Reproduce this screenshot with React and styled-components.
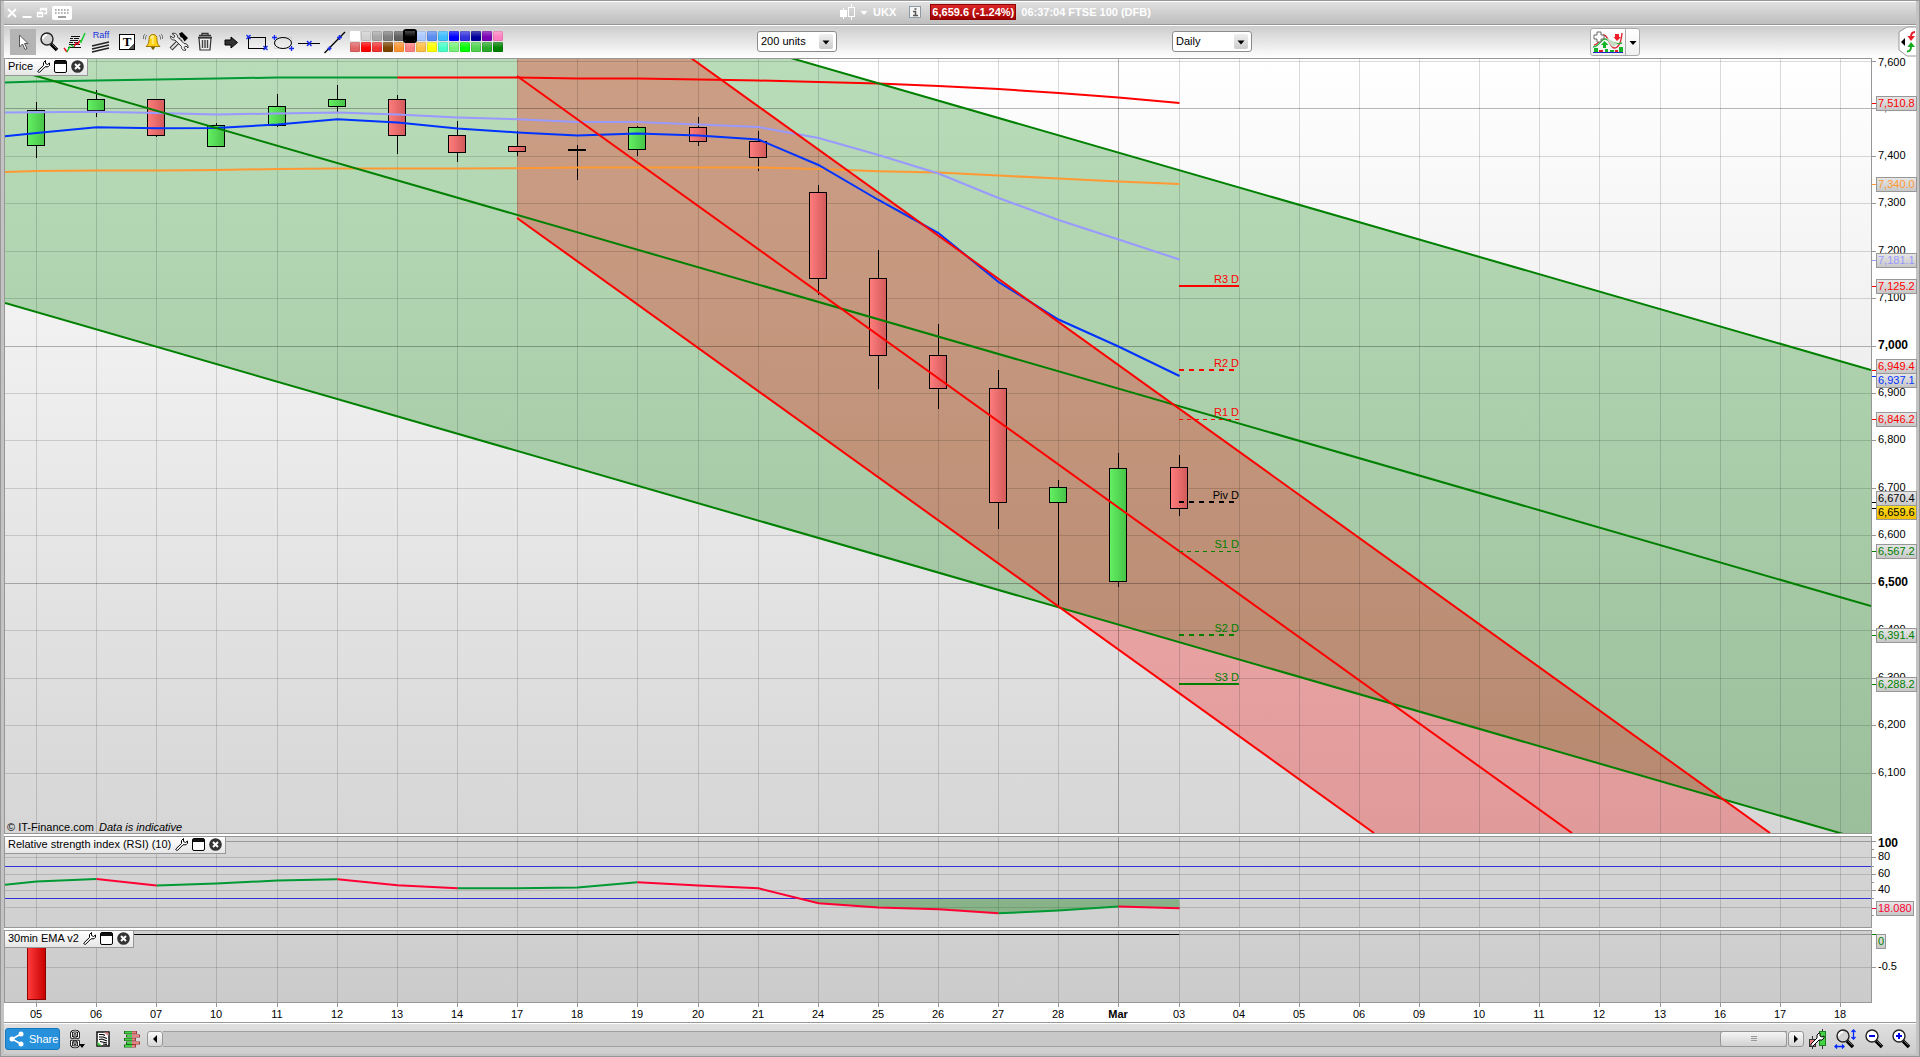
import React from 'react';
import styled, { createGlobalStyle, css } from 'styled-components';

const GlobalStyle = createGlobalStyle`
  * {
    box-sizing: border-box;
  }

  body {
    margin: 0;
    font-family: 'Liberation Sans', Arial, sans-serif;
    font-size: 11px;
    line-height: 13px;
    color: #000;
  }

  button,
  select {
    font: inherit;
    color: inherit;
    padding: 0;
    border: 0;
    background: none;
  }

  svg {
    display: block;
  }
`;

const border = '#979797';

/* ---------- data ---------- */

const pricePane = { top: 59, height: 774 };
const rsiPane = { top: 837, height: 90 };
const emaPane = { top: 931, height: 71 };
const LEFT = 5;
const WIDTH = 1866;

const days = [
  '05', '06', '07', '10', '11', '12', '13', '14', '17', '18', '19', '20', '21',
  '24', '25', '26', '27', '28', 'Mar', '03', '04', '05', '06', '09', '10', '11',
  '12', '13', '16', '17', '18',
];

const dayX = (i) => Math.floor(36.6 + 60.13 * i) + 0.5;
const priceY = (p) => Math.floor(61.4 + (7600 - p) * 0.4745) + 0.5;

// [day, body top, body bottom, high, low, rising]
const candles = [
  [0, 110.5, 145.5, 102, 158, true],
  [1, 99.5, 110.5, 90, 117, true],
  [2, 99.5, 135.5, 99, 137, false],
  [3, 125.5, 146.5, 123, 147, true],
  [4, 106.5, 125.5, 94, 127, true],
  [5, 99.5, 106.5, 85, 112, true],
  [6, 99.5, 135.5, 95, 154, false],
  [7, 135.5, 152.5, 121, 162, false],
  [8, 146.5, 151.5, 131, 156, false],
  [9, 149.5, 150.5, 145, 180, false],
  [10, 127.5, 149.5, 126, 156, true],
  [11, 127.5, 141.5, 117, 146, false],
  [12, 141.5, 157.5, 131, 171, false],
  [13, 192.5, 278.5, 185, 295, false],
  [14, 278.5, 355.5, 250, 389, false],
  [15, 355.5, 388.5, 324, 409, false],
  [16, 388.5, 502.5, 370, 529, false],
  [17, 487.5, 502.5, 480, 606, true],
  [18, 468.5, 581.5, 453, 587, true],
  [19, 467.5, 508.5, 455, 516, false],
];

// first value sits on the left edge, the others on days 0, 1, 2...
const ema200 = [82.5, 81.5, 80.5, 79.5, 78.5, 77.5, 77.5, 77.5, 77.5, 77.5, 78.5, 78.5, 79.5, 80.5, 82, 83.5, 86, 89, 93, 97.5, 103];
const emaLilac = [112.5, 112.2, 111.7, 113, 114.5, 113.5, 112.5, 114.5, 117.5, 119.3, 122, 122, 124.5, 127, 138, 155, 173.5, 198, 220, 239.5, 259.5];
const emaBlue = [136.3, 133, 127.3, 128.3, 128, 124.5, 119.3, 122.5, 128.5, 132.5, 135.5, 133.5, 135.5, 139.5, 165, 200, 233, 282, 319.5, 346.5, 376];
const emaOrange = [172, 171, 170.5, 170.5, 170, 169, 168.5, 168.5, 168.5, 168.3, 167.5, 167.5, 167.5, 167.5, 169, 171.3, 172.5, 175.5, 178.5, 181.5, 184];
const rsi = [884.7, 881.5, 879, 885.5, 883.5, 880.5, 879.3, 885.3, 888.3, 888.3, 887.5, 882.3, 885.5, 888.3, 903.3, 907.5, 909.3, 913.3, 910.5, 906.5, 908.3];

const pivots = [
  { name: 'R3 D', y: 286, color: '#f00', width: 2 },
  { name: 'R2 D', y: 370, color: '#f00', width: 2, dash: '5 5' },
  { name: 'R1 D', y: 419.5, color: '#f00', width: 1, dash: '4 4' },
  { name: 'Piv D', y: 502, color: '#000', width: 2, dash: '5 5' },
  { name: 'S1 D', y: 551.5, color: '#008000', width: 1, dash: '4 4' },
  { name: 'S2 D', y: 635, color: '#008000', width: 2, dash: '5 5' },
  { name: 'S3 D', y: 684, color: '#008000', width: 2 },
];

const prices = [];
for (let p = 7600; p >= 6100; p -= 100) prices.push(p);

const priceTags = [
  { text: '7,510.8', tick: 103.5, y: 103.5, color: '#f00' },
  { text: '7,340.0', tick: 184.5, y: 184.5, color: '#ff9933' },
  { text: '7,181.1', tick: 260.5, y: 260.5, color: '#9999ff' },
  { text: '7,125.2', tick: 286.5, y: 286.5, color: '#f00' },
  { text: '6,949.4', tick: 370.5, y: 366.5, color: '#f00' },
  { text: '6,937.1', tick: 376.5, y: 380.5, color: '#0033ff' },
  { text: '6,846.2', tick: 419.5, y: 419.5, color: '#f00' },
  { text: '6,670.4', tick: 502.5, y: 498.5, color: '#000' },
  { text: '6,659.6', tick: 508.5, y: 512.5, color: '#000', current: true },
  { text: '6,567.2', tick: 551.5, y: 551.5, color: '#008000' },
  { text: '6,391.4', tick: 635.5, y: 635.5, color: '#008000' },
  { text: '6,288.2', tick: 684.5, y: 684.5, color: '#008000' },
];

const swatches = [
  '#ffffff', '#d0d0d0', '#a8a8a8', '#808080', '#606060', '#000000', '#aac8ff',
  '#5a8cf0', '#3cbcff', '#0000ff', '#3232dc', '#000099', '#7a00b4', '#ff80c0',
  '#e06464', '#ff0000', '#f03232', '#7c4400', '#ff9632', '#ff8080', '#ffbe46',
  '#ffff00', '#46ffc8', '#78f078', '#00ff00', '#50d250', '#28aa28', '#008000',
];

/* ---------- window ---------- */

const Shell = styled.div`
  display: flex;
  flex-direction: column;
  height: 100vh;
  min-height: 600px;
  min-width: 1200px;
  padding: 0 3px 2px;
  border: 1px solid ${border};
  background: #c3c3c3;
`;

const TitleBar = styled.header`
  display: flex;
  align-items: center;
  height: 24px;
  padding-bottom: 2px;
  border-top: 1px solid #fff;
  border-bottom: 1px solid ${border};
  background: linear-gradient(#e0e0e0, #bebebe);
  color: #fff;
  font-weight: bold;
`;

const WindowButtons = styled.div`
  display: flex;
  align-items: center;
  padding-top: 2px;
`;

const TitleCenter = styled.div`
  flex: 1;
  display: flex;
  align-items: center;
  justify-content: center;
`;

const SymbolButton = styled.button`
  display: flex;
  align-items: center;
  gap: 5px;
  margin-right: 13px;
`;

const Quote = styled.span`
  margin: 0 5px 0 9px;
  padding: 0 1px;
  border: 1px solid #8c0000;
  background: linear-gradient(#dc2828, #a00000);
  line-height: 14px;
`;

const IconButton = styled.button`
  display: flex;
  align-items: center;
  justify-content: center;
  width: ${(p) => p.$width || 26}px;
  height: 26px;
  ${(p) =>
    p.$active &&
    css`
      background: #b4b4b4;
    `}
`;

const Toolbar = styled.nav`
  display: grid;
  grid-template-columns: 753fr 415fr 418fr 326fr;
  align-items: center;
  height: 33px;
  padding-bottom: 2px;
  border-top: 1px solid #fff;
  background: linear-gradient(#cdcdcd, #fff);
`;

const ToolGroup = styled.div`
  display: flex;
  align-items: center;
  padding-left: 6px;
`;

const Palette = styled.div`
  display: grid;
  grid-template-columns: repeat(14, 11px);
  gap: 1px 0;
  margin-left: 2px;
`;

const Swatch = styled.button`
  width: 10px;
  height: 10px;
  border-radius: 1px;
  background: linear-gradient(rgba(255, 255, 255, 0.3), rgba(255, 255, 255, 0) 60%) ${(p) => p.$color};
  box-shadow: inset 0 0 0 1px rgba(0, 0, 0, ${(p) => (p.$color === '#ffffff' ? 0 : 0.1)});
  ${(p) =>
    p.$selected &&
    css`
      z-index: 1;
      outline: 2px solid #000;
    `}
`;

const SelectBox = styled.label`
  position: relative;
  display: flex;
  align-items: center;
  width: 80px;
  height: 21px;
  border: 1px solid #8c8c8c;
  border-radius: 3px;
  background: #fff;

  select {
    width: 100%;
    height: 19px;
    padding-left: 3px;
    appearance: none;
    outline: none;
  }

  svg {
    position: absolute;
    right: 3px;
    border-radius: 2px;
    background: linear-gradient(#f0f0f0, #ccc);
    pointer-events: none;
  }
`;

const ToolbarEnd = styled.div`
  display: flex;
  align-items: center;
  justify-content: space-between;
`;

const SplitButton = styled.div`
  display: flex;
  height: 28px;
  border: 1px solid #aaa;
  border-radius: 3px;
  background: linear-gradient(#fff, #f0f0f0);

  button {
    display: flex;
    align-items: center;
    justify-content: center;
    width: 34px;
  }

  button + button {
    width: 14px;
    border-left: 1px solid #aaa;
  }
`;

/* ---------- chart ---------- */

const ChartArea = styled.div`
  display: flex;
  flex-direction: column;
  flex: 1;
  min-height: 0;
  background: #fff;
`;

const Charts = styled.main`
  flex: 1;
  min-height: 0;
  display: flex;
  flex-direction: column;
  gap: 2px;
`;

const Pane = styled.section`
  display: grid;
  grid-template-columns: minmax(0, 1fr) 44px;
  grid-template-rows: minmax(0, 1fr);
  flex: ${(p) => (p.$grow ? '1 1 0' : `0 0 ${p.$height}px`)};
  min-height: 0;
`;

const Plot = styled.div`
  position: relative;
  overflow: hidden;
  border: 1px solid ${border};
  background: linear-gradient(${(p) => p.$from}, ${(p) => p.$to});
`;

const PlotSvg = styled.svg`
  width: 100%;
  height: 100%;

  line,
  polyline,
  rect {
    vector-effect: non-scaling-stroke;
  }
`;

const Tab = styled.h2`
  position: absolute;
  top: 0;
  left: 0;
  display: flex;
  align-items: center;
  gap: 4px;
  height: 17px;
  margin: 0;
  padding: 0 3px 1px;
  border: solid ${border};
  border-width: 0 1px 1px 0;
  background: linear-gradient(#fff, #e6e6e6);
  font-size: 11px;
  line-height: 13px;
  font-weight: normal;
  white-space: nowrap;
`;

const Credit = styled.p`
  position: absolute;
  left: 2px;
  bottom: -1px;
  margin: 0;

  em {
    margin-left: 2px;
  }
`;

const PivotLabel = styled.span`
  position: absolute;
  width: 60px;
  margin: -13px 0 0 -60px;
  text-align: right;
  color: ${(p) => p.$color};
`;

const Axis = styled.div`
  position: relative;
`;

const Tick = styled.i`
  position: absolute;
  left: 0;
  width: ${(p) => (p.$minor ? 2 : 4)}px;
  height: 1px;
  background: ${(p) => p.$color || border};
`;

const AxisLabel = styled.span`
  position: absolute;
  left: 6px;
  margin-top: -7px;
  ${(p) =>
    p.$major &&
    css`
      font-size: 12px;
      font-weight: bold;
    `}
`;

const AxisTag = styled.span`
  position: absolute;
  left: 4px;
  height: 15px;
  margin-top: -7px;
  padding: 0 1px;
  border: 1px solid ${border};
  background: ${(p) => (p.$current ? 'linear-gradient(#ffdc1e, #f0be00)' : 'linear-gradient(#e6e6e6, #c8c8c8)')};
  color: ${(p) => p.$color};
`;

const DateAxis = styled.div`
  position: relative;
  height: 19px;
  margin-right: 44px;
`;

const DateLabel = styled.span`
  position: absolute;
  top: 0;
  width: 40px;
  margin-left: -20px;
  padding-top: 5px;
  text-align: center;
  font-weight: ${(p) => (p.$major ? 'bold' : 'normal')};

  &::before {
    content: '';
    position: absolute;
    top: 0;
    left: 20px;
    width: 1px;
    height: 4px;
    background: ${border};
  }
`;

/* ---------- footer ---------- */

const Footer = styled.footer`
  display: flex;
  align-items: center;
  height: 32px;
  padding: 1px 1px 0;
  border-top: 1px solid ${border};
  background: linear-gradient(#fff 1px, #e0e0e0 1px, #cdcdcd);
`;

const ShareButton = styled.button`
  display: flex;
  align-items: center;
  gap: 5px;
  width: 55px;
  height: 22px;
  margin-right: 4px;
  padding-left: 3px;
  border: 1px solid #1478be;
  border-radius: 3px;
  background: #2891dc;
  color: #fff;
`;

const ScrollTrack = styled.div`
  flex: 1;
  display: flex;
  justify-content: flex-end;
  height: 16px;
  margin-right: 1px;
  border: solid #a0a0a0;
  border-width: 1px 0;
  background: #c8c8c8;
`;

const ScrollThumb = styled.button`
  display: flex;
  align-items: center;
  justify-content: center;
  width: 67px;
  height: 16px;
  margin-top: -1px;
  border: 1px solid ${border};
  border-radius: 3px;
  background: linear-gradient(#f5f5f5, #d2d2d2);
`;

const ScrollArrow = styled.button`
  display: flex;
  align-items: center;
  justify-content: center;
  width: 16px;
  height: 16px;
  border: 1px solid ${border};
  border-radius: 3px;
  background: linear-gradient(#fafafa, #d7d7d7);
`;

const ZoomGroup = styled.div`
  display: flex;
  padding-right: 1px;
`;

/* ---------- icons ---------- */

const Svg = ({ w = 24, h = 24, children }) => (
  <svg width={w} height={h} viewBox={`0 0 ${w} ${h}`} fill="none" aria-hidden="true">
    {children}
  </svg>
);

const CloseIcon = () => (
  <Svg w={14} h={14}>
    <path d="M3 3l8 8M11 3l-8 8" stroke="#fff" strokeWidth="2" />
  </Svg>
);

const MinimizeIcon = () => (
  <Svg w={14} h={14}>
    <path d="M2.500 11h9" stroke="#fff" strokeWidth="2" />
  </Svg>
);

const RestoreIcon = () => (
  <Svg w={14} h={14}>
    <path d="M5.500 5V2.500h6v5H9M2.500 6.500h5v4h-5zM5 3.500h7M2 7.500h6" stroke="#fff" strokeWidth="1.300" />
  </Svg>
);

const KeyboardIcon = () => (
  <Svg w={20} h={14}>
    <rect width="20" height="14" rx="2" fill="#fff" />
    <path d="M3 4h14M3 7h14" stroke="#999" strokeWidth="1.600" strokeDasharray="1.600 1.400" />
    <path d="M6 11h8" stroke="#888" strokeWidth="1.600" />
  </Svg>
);

const CandlesIcon = () => (
  <Svg w={15} h={16}>
    <path d="M3.500 4v11M11.500 0v3M11.500 13v3" stroke="#fff" />
    <rect y="6" width="7" height="7" fill="#fff" />
    <rect x="8.500" y="3.500" width="6" height="9" stroke="#fff" />
  </Svg>
);

const InfoIcon = () => (
  <Svg w={12} h={12}>
    <rect x=".5" y=".5" width="11" height="11" fill="#f5f5f5" stroke="#8c9ba5" />
    <path d="M4 5.500h2.500V9M4 9.500h5M5.500 3h2" stroke="#555" strokeWidth="1.500" />
  </Svg>
);

const Caret = ({ color = '#000', w = 14, h = 15 }) => (
  <Svg w={w} h={h}>
    <path d={`M${w / 2 - 3.5} ${h / 2 - 1}h7l-3.500 4z`} fill={color} />
  </Svg>
);

const PointerIcon = () => (
  <Svg>
    <path d="M8.500 5v12l3-3 2.500 5.500 2-1-2.500-5H17z" fill="#fff" stroke="#555" />
  </Svg>
);

const MagnifierIcon = ({ sign, arrows }) => (
  <Svg>
    <path d="M14 14l6 6" stroke="#000" strokeWidth="3.500" />
    <path d="M14.500 13.500l5 5" stroke="#888" strokeWidth=".8" />
    <circle cx="10" cy="9" r="6" fill={sign ? '#fff' : '#d2d2d2'} stroke="#222" strokeWidth="1.400" />
    {!sign && <path d="M6 9a4 4 0 0 1 4-4" stroke="#fff" strokeWidth="2" />}
    {sign && <path d="M7 9h6" stroke="#0000e6" strokeWidth="2" />}
    {sign === 'plus' && <path d="M10 6v6" stroke="#0000e6" strokeWidth="2" />}
    {arrows && (
      <path d="M20.500 3v9M18.500 5l2-2 2 2M18.500 10l2 2 2-2M2 19.500h9M4 17.500l-2 2 2 2M9 17.500l2 2-2 2" stroke="#0028ff" strokeWidth="1.300" />
    )}
  </Svg>
);

const TrendIcon = () => (
  <Svg>
    <g stroke="#111" strokeWidth="1.200">
      <path d="M8 6.500h9M7 8.500h3M11 8.500h5M7 10.500h8M6 12.500h4M11 12.500h5M6 14.500h11M5 17.500h13" />
    </g>
    <path d="M1 18l3 4M11 17l2-4 2 1 2-4" stroke="#f01428" strokeWidth="1.500" />
    <path d="M4 22l3-6M8 15l3 2M17 10l1 2 4-9" stroke="#14c828" strokeWidth="1.500" />
  </Svg>
);

const RaffBox = styled.span`
  display: flex;
  flex-direction: column;
  align-items: center;
  color: #1432dc;
  line-height: 9px;
  font-size: 9px;
`;

const RaffLines = () => (
  <Svg w={20} h={13}>
    <path d="M1 6l17-4M1 9l17-4M1 12l17-4" stroke="#222" strokeWidth="1.400" />
  </Svg>
);

const TextToolGlyph = styled.span`
  display: grid;
  place-items: center;
  width: 16px;
  height: 16px;
  border: 1px solid #000;
  background: linear-gradient(315deg, #555 4px, #fff 4px);
  font: bold 13px/14px 'Liberation Serif', serif;
`;

const BellIcon = () => (
  <Svg>
    <path d="M12 4.500c-3 0-4 2-4 5 0 4-1 5-3 7h14c-2-2-3-3-3-7 0-3-1-5-4-5z" fill="#ffd21e" stroke="#a07800" />
    <path d="M10 9c0-2 1-3 2-3v8" stroke="#fff08c" strokeWidth="1.500" />
    <path d="M10.500 17.500h3l-1.500 2z" fill="#785a00" stroke="#785a00" />
    <path d="M6 5L4.500 7v2.500M4 4L2.500 6v3M18 5l1.500 2v2.500M20 4l1.500 2v3" stroke="#777" />
  </Svg>
);

const HammerIcon = () => (
  <Svg>
    <path d="M14 9L4 19" stroke="#333" strokeWidth="4" />
    <path d="M14 9L4.500 18.500" stroke="#e6e6e6" strokeWidth="2" />
    <path d="M5 3.500L8 6 6.500 8 3.500 6C3 8 4.500 10.500 8 10l6.500 6.500c-.5 3 2 4.500 4.500 3.500l-2-2.500 2-1.500 2 2c.5-3-1-4.500-4-4.500L10.500 7C11 4.500 8 2.500 5 3.500z" fill="#f0f0f0" stroke="#333" />
    <path d="M12 3.500L15 2l6 6-3.500 3.500-2-3.500-2-1z" fill="#000" />
  </Svg>
);

const TrashIcon = () => (
  <Svg>
    <path d="M6 8h12l-1 12H7z" fill="#eee" stroke="#333" strokeWidth="1.200" />
    <path d="M5 7.500h14M6 5.500h12M9 5V3.500h6V5" stroke="#333" strokeWidth="1.300" />
    <path d="M9.500 10v8M12 10v8M14.500 10v8" stroke="#444" strokeWidth="1.400" />
  </Svg>
);

const ArrowIcon = () => (
  <Svg>
    <path d="M6 10h6V7l6.500 5.500L12 18v-3H6z" fill="#333" stroke="#000" />
  </Svg>
);

const RectIcon = () => (
  <Svg>
    <rect x="3.500" y="7.500" width="17" height="11" stroke="#000" />
    <path d="M1.500 5l4 4M5.500 5l-4 4M18.500 16l4 4M22.500 16l-4 4" stroke="#1428f0" strokeWidth="1.400" />
  </Svg>
);

const EllipseIcon = () => (
  <Svg>
    <rect x="3.500" y="7.500" width="17" height="11" stroke="#bbb" strokeDasharray="1 1" />
    <ellipse cx="12" cy="13" rx="8.500" ry="5.500" stroke="#000" />
    <path d="M3.500 5v5M1 7.500h5M20.500 16v5M18 18.500h5" stroke="#1428f0" strokeWidth="1.300" />
  </Svg>
);

const HorizontalIcon = () => (
  <Svg>
    <path d="M1 13.500h22" stroke="#000" />
    <path d="M10 11l4.500 5M14.500 11L10 16" stroke="#1428f0" strokeWidth="1.400" />
  </Svg>
);

const SegmentIcon = () => (
  <Svg>
    <path d="M1.500 23L22 2" stroke="#000" strokeWidth="1.300" />
    <path d="M4.500 18.500h4M6.500 16.500v4M14 7.500h5M16.500 5v5" stroke="#1428f0" strokeWidth="1.600" />
  </Svg>
);

const IndicatorIcon = () => (
  <Svg w={32} h={24}>
    <path d="M2 15c6 0 6-10 10-10s6 13 10 13 7-4 8-15" stroke="#dc2832" strokeWidth="1.400" />
    <path d="M1 17c6 0 8-8 12-8s8 7 17 4" stroke="#28b43c" strokeWidth="1.400" />
    <path d="M14 8c3 3 4 8 7 9 2-1 3-2 4-4-4 0-7-4-11-5z" fill="#c8dcc8" />
    <path d="M5 2h4v3h3v4H9v3H5V9H2V5h3z" fill="#fff" stroke="#666" />
    <path d="M23 4h4v3h2l-4 4-3.500-4H23z" fill="#f01e28" />
    <path d="M11 18v-3H9l3.500-4 4 4H14v3z" fill="#14b428" />
    <path d="M2 18h4v4H2zM13 19h3v3h-3zM18 20h4v2h-4zM27 17h4v5h-4z" fill="#14b428" />
    <path d="M7 20h4v2H7zM23 20h3v2h-3z" fill="#dc1e28" />
    <path d="M1 22.500h30" stroke="#1e28c8" />
  </Svg>
);

const OrderHandleIcon = () => (
  <Svg w={18} h={31}>
    <path d="M18 1H9L1 6v18l8 6h9" fill="#fff" stroke="#999" />
    <path d="M3 16l4-4v8z" fill="#000" />
    <path d="M17 6c-4 0-4 3-4 5" stroke="#e61e28" strokeWidth="2" />
    <path d="M9.500 10l3.500 5 4-5z" fill="#e61e28" />
    <path d="M9 25.500c4 0 4-3 4-5.500" stroke="#14aa1e" strokeWidth="2" />
    <path d="M9.500 21l3.500-5 4 5z" fill="#14aa1e" />
  </Svg>
);

const WrenchIcon = () => (
  <Svg w={13} h={13}>
    <path d="M8.500 .5L6.500 2.500v3L.8 11c0 1 1 1.800 1.800 1.300L8 6.800h3l1.500-1.500V3L10.500 4.500 8.500 3.500z" fill="#fff" stroke="#000" strokeLinejoin="round" />
  </Svg>
);

const MaximizeIcon = () => (
  <Svg w={13} h={13}>
    <rect x=".5" y=".5" width="12" height="12" rx="1.500" fill="#fff" stroke="#000" />
    <path d="M1 1h11v3H1z" fill="#111" />
  </Svg>
);

const CloseRoundIcon = () => (
  <Svg w={13} h={13}>
    <circle cx="6.500" cy="6.500" r="6.300" fill="#333" />
    <path d="M4 4l5 5M9 4L4 9" stroke="#fff" strokeWidth="2" />
  </Svg>
);

const ShareIcon = () => (
  <Svg w={15} h={16}>
    <path d="M12 3L3 8l9 5" stroke="#fff" strokeWidth="1.500" />
    <circle cx="3" cy="8" r="2.500" fill="#fff" />
    <circle cx="12" cy="3" r="2.500" fill="#fff" />
    <circle cx="12" cy="13" r="2.500" fill="#fff" />
  </Svg>
);

const ChainIcon = () => (
  <Svg w={18} h={20}>
    <g strokeLinecap="round" strokeLinejoin="round">
      <path d="M5 8.500H3.500v-5C4.500 1.500 9.500 1.500 10.500 3.500v5H9M7 5.500v3" stroke="#000" strokeWidth="2.600" />
      <path d="M5 8.500H3.500v-5C4.500 1.500 9.500 1.500 10.500 3.500v5H9M7 5.500v3" stroke="#fff" strokeWidth="1" />
      <path d="M5 12H3.500v4.500C4.500 18.500 9.500 18.500 10.500 16.500V12H9M7 12v3" stroke="#000" strokeWidth="2.600" />
      <path d="M5 12H3.500v4.500C4.500 18.500 9.500 18.500 10.500 16.500V12H9M7 12v3" stroke="#fff" strokeWidth="1" />
    </g>
    <path d="M11 15h6l-3 4z" fill="#000" />
  </Svg>
);

const NotesIcon = () => (
  <Svg w={14} h={16}>
    <rect x="1" y="1" width="12" height="14" fill="#fff" stroke="#000" strokeWidth="1.400" />
    <path d="M8 1.500h4.500V5z" fill="#e68c8c" />
    <path d="M1.500 11v3.500H6z" fill="#3cc83c" />
    <path d="M3 3.500h4l2 1M3 6h4l4 1.500M3 8.500l3-.5 5 2M4 10.500l7 1.500M7 13l4 .5" stroke="#000" strokeWidth="1.200" />
  </Svg>
);

const DepthIcon = () => (
  <Svg w={18} h={18}>
    <path d="M1 2.500h8M3 6h6M1 9.500h8M3 13h6M1 16h8" stroke="#1e641e" strokeWidth="3" />
    <path d="M2 2.500h7M4 6h5M2 9.500h7M4 13h5M2 16h7" stroke="#46d246" strokeWidth="2" />
    <path d="M9 2.500h5M9 6h8M9 9.500h4M9 13h8M9 16h4" stroke="#963c3c" strokeWidth="3" />
    <path d="M9 2.500h4M9 6h7M9 9.500h3M9 13h7M9 16h3" stroke="#e68282" strokeWidth="2" />
  </Svg>
);

const CandleSettingsIcon = () => (
  <Svg>
    <path d="M7.500 9v13M17.500 2v20" stroke="#333" />
    <rect x="4.500" y="12.500" width="6" height="7" fill="#e67878" stroke="#333" />
    <rect x="14.500" y="4.500" width="6" height="14" fill="#46d246" stroke="#1e7d1e" />
    <path d="M14 6l-2 2v3l-6 6c-1 2 1 3 2 2l6-6h3l2-2v-2l-2 1-2-1V6z" fill="#fff" stroke="#000" strokeLinejoin="round" />
  </Svg>
);

const ArrowGlyph = ({ right }) => (
  <Svg w={8} h={10}>
    <path d={right ? 'M2 1l4 4-4 4z' : 'M6 1L2 5l4 4z'} fill="#000" />
  </Svg>
);

const GripIcon = () => (
  <Svg w={8} h={8}>
    <path d="M1 1.500h6M1 3.500h6M1 5.500h6" stroke="#999" />
  </Svg>
);

const tools = [
  { name: 'Pointer', icon: <PointerIcon />, active: true },
  { name: 'Zoom', icon: <MagnifierIcon /> },
  { name: 'Trend', icon: <TrendIcon /> },
  { name: 'Raff channel', icon: <RaffBox>Raff<RaffLines /></RaffBox> },
  { name: 'Text', icon: <TextToolGlyph>T</TextToolGlyph> },
  { name: 'Alert', icon: <BellIcon /> },
  { name: 'Tools', icon: <HammerIcon /> },
  { name: 'Delete', icon: <TrashIcon /> },
  { name: 'Arrow', icon: <ArrowIcon /> },
  { name: 'Rectangle', icon: <RectIcon /> },
  { name: 'Ellipse', icon: <EllipseIcon /> },
  { name: 'Horizontal line', icon: <HorizontalIcon /> },
  { name: 'Segment', icon: <SegmentIcon /> },
];

/* ---------- chart parts ---------- */

const toPoints = (values, from = 0, to = values.length - 1) =>
  values
    .slice(from, to + 1)
    .map((y, i) => `${from + i === 0 ? LEFT : dayX(from + i - 1)},${y}`)
    .join(' ');

// top offset of a y value, as a share of the framed pane
const axisTop = (pane, y) => ({
  top: `${((Math.floor(y) - pane.top + 1) / (pane.height + 2)) * 100}%`,
});

function Grid({ pane, rows }) {
  return (
    <g stroke="#000" shapeRendering="crispEdges">
      {days.map((d, i) => (
        <line
          key={i}
          x1={dayX(i)}
          x2={dayX(i)}
          y1={pane.top}
          y2={pane.top + pane.height}
          strokeOpacity={d === 'Mar' ? 0.28 : 0.14}
        />
      ))}
      {rows.map(([y, major]) => (
        <line
          key={y}
          x1={LEFT}
          x2={LEFT + WIDTH}
          y1={y}
          y2={y}
          strokeOpacity={major ? 0.28 : 0.14}
        />
      ))}
    </g>
  );
}

function PaneTab({ title }) {
  return (
    <Tab>
      {title}
      <button aria-label="Settings"><WrenchIcon /></button>
      <button aria-label="Maximise"><MaximizeIcon /></button>
      <button aria-label="Close"><CloseRoundIcon /></button>
    </Tab>
  );
}

function Chart({ pane, children }) {
  return (
    <PlotSvg
      viewBox={`${LEFT} ${pane.top} ${WIDTH} ${pane.height}`}
      preserveAspectRatio="none"
      fill="none"
    >
      {children}
    </PlotSvg>
  );
}

function Candle({ data }) {
  const [day, top, bottom, high, low, rising] = data;
  const x = dayX(day);
  return (
    <g stroke="#000" shapeRendering="crispEdges">
      <line x1={x} x2={x} y1={high} y2={low} />
      <rect
        x={x - 9}
        y={top}
        width="17"
        height={bottom - top}
        fill={rising ? 'url(#up)' : 'url(#down)'}
      />
    </g>
  );
}

function PricePane() {
  return (
    <Pane $grow>
      <Plot $from="#fff" $to="#d6d6d6">
        <Chart pane={pricePane}>
          <defs>
            <linearGradient id="up">
              <stop stopColor="#64f064" />
              <stop offset="1" stopColor="#46c346" />
            </linearGradient>
            <linearGradient id="down">
              <stop stopColor="#ff7d7d" />
              <stop offset="1" stopColor="#d25a5a" />
            </linearGradient>
          </defs>
          <polygon points="5,-169 1871,370 1871,842 5,303" fill="#008000" fillOpacity=".275" />
          <polygon points="517,-67 1770,833 1374,833 517,218" fill="#f00" fillOpacity=".28" />
          <Grid pane={pricePane} rows={prices.map((p) => [priceY(p), p % 500 === 0])} />
          {candles.map((c) => (
            <Candle key={c[0]} data={c} />
          ))}
          <g strokeWidth="2">
            <polyline points={toPoints(emaOrange)} stroke="#ff9933" />
            <polyline points={toPoints(emaLilac)} stroke="#9999ff" />
            <polyline points={toPoints(emaBlue)} stroke="#0033ff" />
            <polyline points={toPoints(ema200, 0, 7)} stroke="#009933" />
            <polyline points={toPoints(ema200, 7)} stroke="#f00" />
            <g stroke="#008000">
              <line x1="5" y1="-169" x2="1871" y2="370" />
              <line x1="5" y1="67" x2="1871" y2="606" />
              <line x1="5" y1="303" x2="1871" y2="842" />
            </g>
            <g stroke="#f00">
              <line x1="517" y1="-67" x2="1770" y2="833" />
              <line x1="517" y1="76" x2="1572" y2="833" />
              <line x1="517" y1="218" x2="1374" y2="833" />
            </g>
          </g>
          {pivots.map((p) => (
            <line
              key={p.name}
              x1="1179"
              x2="1239"
              y1={p.y}
              y2={p.y}
              stroke={p.color}
              strokeWidth={p.width}
              strokeDasharray={p.dash}
              shapeRendering="crispEdges"
            />
          ))}
        </Chart>
        {pivots.map((p) => (
          <PivotLabel
            key={p.name}
            $color={p.color}
            style={{
              top: `${((Math.floor(p.y) - pricePane.top) / pricePane.height) * 100}%`,
              left: `${((1239 - LEFT) / WIDTH) * 100}%`,
            }}
          >
            {p.name}
          </PivotLabel>
        ))}
        <PaneTab title="Price" />
        <Credit>
          © IT-Finance.com <em>Data is indicative</em>
        </Credit>
      </Plot>
      <Axis>
        {prices.map((p) => (
          <React.Fragment key={p}>
            <Tick style={axisTop(pricePane, priceY(p))} />
            <AxisLabel
              $major={p % 1000 === 0 || p === 6500}
              style={axisTop(pricePane, Math.max(priceY(p), 63))}
            >
              {p.toLocaleString('en-US')}
            </AxisLabel>
          </React.Fragment>
        ))}
        {priceTags.map((t) => (
          <React.Fragment key={t.text}>
            <Tick $color={t.color} style={axisTop(pricePane, t.tick)} />
            <AxisTag $color={t.color} $current={t.current} style={axisTop(pricePane, t.y)}>
              {t.text}
            </AxisTag>
          </React.Fragment>
        ))}
      </Axis>
    </Pane>
  );
}

function RsiPane() {
  const falling = [[2, 3], [6, 8], [11, 17], [19, 20]];
  const rising = [[0, 2], [3, 6], [8, 11], [17, 19]];
  return (
    <Pane $height={92}>
      <Plot $from="#d6d6d6" $to="#d0d0d0">
        <Chart pane={rsiPane}>
          <Grid
            pane={rsiPane}
            rows={[[841.5, true], [857.5], [874.5], [890.5], [907.5]]}
          />
          <polygon
            points={`799,898.5 ${toPoints(rsi, 14)} 1179,898.5`}
            fill="#007800"
            fillOpacity=".35"
          />
          <g stroke="#3232dc" shapeRendering="crispEdges">
            <line x1="5" x2="1871" y1="866.5" y2="866.5" />
            <line x1="5" x2="1871" y1="898.5" y2="898.5" />
          </g>
          {rising.map(([a, b]) => (
            <polyline key={a} points={toPoints(rsi, a, b)} stroke="#009933" strokeWidth="2" />
          ))}
          {falling.map(([a, b]) => (
            <polyline key={a} points={toPoints(rsi, a, b)} stroke="#ff0033" strokeWidth="2" />
          ))}
        </Chart>
        <PaneTab title="Relative strength index (RSI) (10)" />
      </Plot>
      <Axis>
        {[841, 857, 874, 890].map((y) => (
          <Tick key={y} style={axisTop(rsiPane, y)} />
        ))}
        {[849, 866, 882, 898, 915].map((y) => (
          <Tick key={y} $minor style={axisTop(rsiPane, y)} />
        ))}
        <AxisLabel $major style={axisTop(rsiPane, 844)}>100</AxisLabel>
        <AxisLabel style={axisTop(rsiPane, 857)}>80</AxisLabel>
        <AxisLabel style={axisTop(rsiPane, 874)}>60</AxisLabel>
        <AxisLabel style={axisTop(rsiPane, 890)}>40</AxisLabel>
        <Tick $color="#ff0033" style={axisTop(rsiPane, 908)} />
        <AxisTag $color="#ff0033" style={axisTop(rsiPane, 908)}>18.080</AxisTag>
      </Axis>
    </Pane>
  );
}

function EmaPane() {
  return (
    <Pane $height={73}>
      <Plot $from="#d0d0d0" $to="#cbcbcb">
        <Chart pane={emaPane}>
          <defs>
            <linearGradient id="bar">
              <stop stopColor="#ff3c3c" />
              <stop offset="1" stopColor="#c80000" />
            </linearGradient>
          </defs>
          <Grid pane={emaPane} rows={[[934.5, true], [967.5]]} />
          <g shapeRendering="crispEdges">
            <rect x="27.5" y="934.5" width="18" height="65" fill="url(#bar)" stroke="#8c0000" />
            <line x1="5" x2="1179" y1="934.5" y2="934.5" stroke="#000" />
          </g>
        </Chart>
        <PaneTab title="30min EMA v2" />
      </Plot>
      <Axis>
        <Tick $color="#008000" style={axisTop(emaPane, 934)} />
        <Tick style={axisTop(emaPane, 967)} />
        <AxisTag $color="#008000" style={axisTop(emaPane, 941)}>0</AxisTag>
        <AxisLabel style={axisTop(emaPane, 967)}>-0.5</AxisLabel>
      </Axis>
    </Pane>
  );
}

function Dropdown({ label, value }) {
  return (
    <SelectBox>
      <select aria-label={label} defaultValue={value}>
        <option>{value}</option>
      </select>
      <Caret />
    </SelectBox>
  );
}

function App() {
  return (
    <Shell>
      <GlobalStyle />
      <TitleBar>
        <WindowButtons>
          <IconButton $width={15} aria-label="Close window"><CloseIcon /></IconButton>
          <IconButton $width={15} aria-label="Minimise window"><MinimizeIcon /></IconButton>
          <IconButton $width={15} aria-label="Restore window"><RestoreIcon /></IconButton>
          <IconButton $width={26} aria-label="Keyboard"><KeyboardIcon /></IconButton>
        </WindowButtons>
        <TitleCenter>
          <SymbolButton>
            <CandlesIcon />
            <Caret color="#fff" w={8} h={8} />
            UKX
          </SymbolButton>
          <InfoIcon />
          <Quote>6,659.6 (-1.24%)</Quote>
          <span>06:37:04 FTSE 100 (DFB)</span>
        </TitleCenter>
      </TitleBar>

      <Toolbar>
        <ToolGroup>
          {tools.map((t) => (
            <IconButton key={t.name} aria-label={t.name} $active={t.active}>
              {t.icon}
            </IconButton>
          ))}
          <Palette>
            {swatches.map((c) => (
              <Swatch key={c} aria-label={`Colour ${c}`} $color={c} $selected={c === '#000000'} />
            ))}
          </Palette>
        </ToolGroup>
        <Dropdown label="Number of units" value="200 units" />
        <Dropdown label="Timeframe" value="Daily" />
        <ToolbarEnd>
          <SplitButton>
            <button aria-label="Add indicator"><IndicatorIcon /></button>
            <button aria-label="Indicator list"><Caret w={12} h={12} /></button>
          </SplitButton>
          <button aria-label="Order panel"><OrderHandleIcon /></button>
        </ToolbarEnd>
      </Toolbar>

      <ChartArea>
        <Charts>
          <PricePane />
          <RsiPane />
          <EmaPane />
        </Charts>
        <DateAxis>
          {days.map((d, i) => (
            <DateLabel
              key={i}
              $major={d === 'Mar'}
              style={{ left: `${((dayX(i) - 4.5) / (WIDTH + 2)) * 100}%` }}
            >
              {d}
            </DateLabel>
          ))}
        </DateAxis>
      </ChartArea>

      <Footer>
        <ShareButton>
          <ShareIcon />
          Share
        </ShareButton>
        <IconButton aria-label="Link charts"><ChainIcon /></IconButton>
        <IconButton aria-label="Notes"><NotesIcon /></IconButton>
        <IconButton $width={31} aria-label="Market depth"><DepthIcon /></IconButton>
        <ScrollArrow aria-label="Scroll left"><ArrowGlyph /></ScrollArrow>
        <ScrollTrack>
          <ScrollThumb aria-label="Scroll position"><GripIcon /></ScrollThumb>
        </ScrollTrack>
        <ScrollArrow aria-label="Scroll right"><ArrowGlyph right /></ScrollArrow>
        <ZoomGroup>
          <IconButton aria-label="Candle settings"><CandleSettingsIcon /></IconButton>
          <IconButton $width={30} aria-label="Fit"><MagnifierIcon arrows /></IconButton>
          <IconButton $width={27} aria-label="Zoom out"><MagnifierIcon sign="minus" /></IconButton>
          <IconButton $width={27} aria-label="Zoom in"><MagnifierIcon sign="plus" /></IconButton>
        </ZoomGroup>
      </Footer>
    </Shell>
  );
}

export default App;
